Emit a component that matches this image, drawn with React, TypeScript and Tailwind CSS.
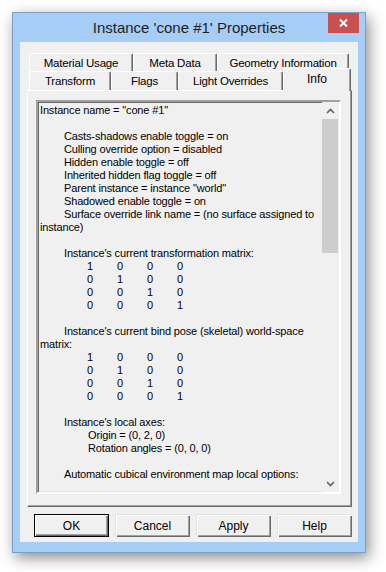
import React from 'react'

const UI = "font-['Liberation_Sans',Arial,sans-serif]"

type TabProps = { label: string; w: string; selected?: boolean; tall?: boolean }

function Tab({ label, w, selected, tall }: TabProps) {
  if (selected) {
    return (
      <div
        className={`${w} relative top-[1px] z-10 flex h-[23px] shrink-0 justify-center rounded-t-[2px] border-l border-t border-r border-l-white border-t-white border-r-[#696969] bg-[#f0f0f0] pt-[3px] shadow-[inset_-1px_0_0_#a0a0a0]`}
      >
        <span className="text-[12px] leading-[14px] text-black">{label}</span>
      </div>
    )
  }
  return (
    <div
      className={`${w} ${tall ? 'h-[19px]' : 'h-[18px]'} flex shrink-0 items-center justify-center rounded-t-[2px] border-l border-t border-r border-l-white border-t-white border-r-[#696969] bg-[#f0f0f0] shadow-[inset_-1px_0_0_#a0a0a0]`}
    >
      <span className="text-[11.5px] leading-[14px] tracking-[-0.2px] text-black">{label}</span>
    </div>
  )
}

function Btn({ label, isDefault }: { label: string; isDefault?: boolean }) {
  return (
    <button
      className={
        isDefault
          ? 'flex h-[23px] w-[75px] items-center justify-center border border-black bg-[#f0f0f0] text-[12px] text-black shadow-[inset_1px_1px_0_#fff,inset_-1px_-1px_0_#696969,inset_-2px_-2px_0_#a0a0a0]'
          : 'flex h-[23px] w-[75px] items-center justify-center bg-[#f0f0f0] text-[12px] text-black shadow-[inset_1px_1px_0_#e3e3e3,inset_2px_2px_0_#fff,inset_-1px_-1px_0_#696969,inset_-2px_-2px_0_#a0a0a0]'
      }
    >
      {label}
    </button>
  )
}

function Line({ text, indent = 0 }: { text?: string; indent?: number }) {
  const pad = indent === 2 ? 'pl-[48px]' : indent === 1 ? 'pl-[24px]' : 'pl-0'
  return <div className={`${pad} h-[13px] whitespace-nowrap`}>{text ?? '\u00a0'}</div>
}

function MatrixRow({ vals }: { vals: number[] }) {
  return (
    <div className="flex h-[13px] pl-[47px]">
      {vals.map((v, i) => (
        <span key={i} className="w-[30px] shrink-0">
          {v}
        </span>
      ))}
    </div>
  )
}

const identity = [
  [1, 0, 0, 0],
  [0, 1, 0, 0],
  [0, 0, 1, 0],
  [0, 0, 0, 1],
]

export default function App() {
  return (
    <div className={`${UI} h-[572px] w-[386px] overflow-hidden bg-white pl-[12px] pt-[12px]`}>
      {/* window frame */}
      <div className="flex h-[541px] w-[354px] flex-col border border-[#7c9fc9] bg-[#a6cdf5] shadow-[3px_5px_14px_rgba(0,0,0,0.45)]">
        {/* title bar */}
        <div className="relative flex h-[29px] shrink-0 items-center justify-center">
          <span className="text-[15px] leading-none text-[#1e1e1e]">Instance 'cone #1' Properties</span>
          <div className="absolute right-[6px] top-0 flex h-[20px] w-[31px] items-center justify-center bg-[#c75050]">
            <svg width="9" height="8" viewBox="0 0 9 8">
              <path d="M1 0.5 L8 7.5 M8 0.5 L1 7.5" stroke="#fff" strokeWidth="2" />
            </svg>
          </div>
        </div>

        {/* client area */}
        <div className="mx-[7px] flex h-[500px] flex-col bg-[#f0f0f0] pt-[11px]">
          {/* tab rows */}
          <div className="ml-[9px] flex">
            <Tab label="Material Usage" w="w-[104px]" />
            <Tab label="Meta Data" w="w-[84px]" />
            <Tab label="Geometry Information" w="w-[132px]" />
          </div>
          <div className="ml-[9px] flex h-[19px] items-end">
            <Tab label="Transform" w="w-[82px]" tall />
            <Tab label="Flags" w="w-[67px]" tall />
            <Tab label="Light Overrides" w="w-[105px]" tall />
            <Tab label="Info" w="w-[68px]" selected />
          </div>

          {/* tab panel */}
          <div className="ml-[7px] h-[417px] w-[325px] border-l border-t border-r border-b border-l-white border-t-white border-r-[#696969] border-b-[#696969] shadow-[inset_-1px_-1px_0_#a0a0a0]">
            {/* read-only edit box */}
            <div className="ml-[8px] mt-[9px] flex h-[394px] w-[305px] border-2 border-l-[#a0a0a0] border-t-[#a0a0a0] border-r-white border-b-white shadow-[inset_1px_1px_0_#696969,inset_-1px_-1px_0_#e3e3e3]">
              <div className="flex-1 overflow-hidden pl-[2px] pt-[2px] text-[11px] leading-[13px] tracking-[-0.15px] text-black">
                <Line text={'Instance name = "cone #1"'} />
                <Line />
                <Line indent={1} text="Casts-shadows enable toggle = on" />
                <Line indent={1} text="Culling override option = disabled" />
                <Line indent={1} text="Hidden enable toggle = off" />
                <Line indent={1} text="Inherited hidden flag toggle = off" />
                <Line indent={1} text={'Parent instance = instance "world"'} />
                <Line indent={1} text="Shadowed enable toggle = on" />
                <Line indent={1} text="Surface override link name = (no surface assigned to" />
                <Line text="instance)" />
                <Line />
                <Line indent={1} text="Instance's current transformation matrix:" />
                {identity.map((r, i) => (
                  <MatrixRow key={'a' + i} vals={r} />
                ))}
                <Line />
                <Line indent={1} text="Instance's current bind pose (skeletal) world-space" />
                <Line text="matrix:" />
                {identity.map((r, i) => (
                  <MatrixRow key={'b' + i} vals={r} />
                ))}
                <Line />
                <Line indent={1} text="Instance's local axes:" />
                <Line indent={2} text="Origin = (0, 2, 0)" />
                <Line indent={2} text="Rotation angles = (0, 0, 0)" />
                <Line />
                <Line indent={1} text="Automatic cubical environment map local options:" />
              </div>

              {/* vertical scrollbar */}
              <div className="flex w-[17px] shrink-0 flex-col bg-[#f0f0f0] pr-[1px]">
                <div className="flex h-[17px] items-center justify-center">
                  <svg width="9" height="6" viewBox="0 0 9 6">
                    <path d="M1 5 L4.5 1.5 L8 5" stroke="#606060" strokeWidth="1.6" fill="none" />
                  </svg>
                </div>
                <div className="flex-1">
                  <div className="h-[134px] bg-[#cdcdcd]" />
                </div>
                <div className="flex h-[17px] items-center justify-center">
                  <svg width="9" height="6" viewBox="0 0 9 6">
                    <path d="M1 1 L4.5 4.5 L8 1" stroke="#606060" strokeWidth="1.6" fill="none" />
                  </svg>
                </div>
              </div>
            </div>
          </div>

          {/* dialog buttons */}
          <div className="ml-[14px] mt-[7px] flex gap-[6px]">
            <Btn label="OK" isDefault />
            <Btn label="Cancel" />
            <Btn label="Apply" />
            <Btn label="Help" />
          </div>
        </div>
      </div>
    </div>
  )
}
